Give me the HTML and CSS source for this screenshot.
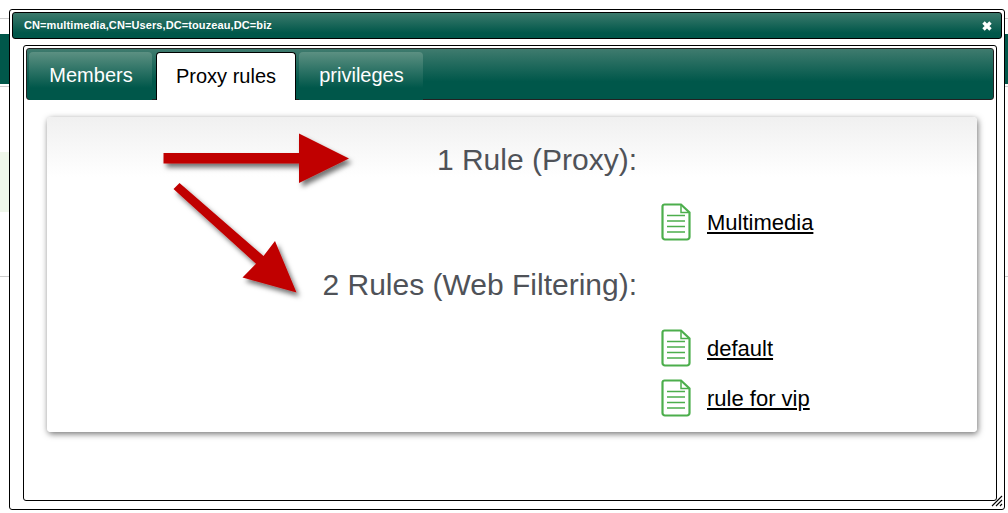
FILE: index.html
```html
<!DOCTYPE html>
<html lang="en">
<head>
<meta charset="utf-8">
<title>Proxy rules</title>
<link rel="stylesheet" href="styles.css">
</head>
<body>
<div class="backdrop">
  <div class="bg-line-top"></div>
  <div class="bg-band"></div>
  <div class="bg-line-mid"></div>
  <div class="bg-pale"></div>
  <div class="bg-line-low"></div>
</div>
<section class="dialog">
  <header class="titlebar">
    <span class="title">CN=multimedia,CN=Users,DC=touzeau,DC=biz</span>
    <svg class="close" width="10" height="10" viewBox="0 0 10 10"><path d="M1.5 1.5 8.5 8.5M8.5 1.5 1.5 8.5" stroke="#fff" stroke-width="3.4"/></svg>
  </header>
  <div class="content">
    <nav class="tabs">
      <a class="tab">Members</a>
      <a class="tab active">Proxy rules</a>
      <a class="tab">privileges</a>
    </nav>
    <div class="card">
      <div class="rule-group">
        <h2 class="heading">1 Rule (Proxy):</h2>
        <ul class="rules">
          <li class="rule">
            <svg class="doc" width="30" height="38" viewBox="0 0 30 38"><path d="M3.5 1.5H20L28.5 9.5V34a2.500 2.500 0 0 1-2.500 2.500H4A2.500 2.500 0 0 1 1.500 34V3.500A2 2 0 0 1 3.500 1.500Z" fill="#fff" stroke="#4cae4c" stroke-width="2.200"/><path d="M20 2V9.500H28" fill="none" stroke="#4cae4c" stroke-width="1.500"/><path d="M6 12.500H24M6 18H24M6 23.500H24M6 29H24" stroke="#4cae4c" stroke-width="1.700"/></svg>
            <a class="rule-link">Multimedia</a>
          </li>
        </ul>
      </div>
      <div class="rule-group">
        <h2 class="heading">2 Rules (Web Filtering):</h2>
        <ul class="rules">
          <li class="rule">
            <svg class="doc" width="30" height="38" viewBox="0 0 30 38"><path d="M3.5 1.5H20L28.5 9.5V34a2.500 2.500 0 0 1-2.500 2.500H4A2.500 2.500 0 0 1 1.500 34V3.500A2 2 0 0 1 3.500 1.500Z" fill="#fff" stroke="#4cae4c" stroke-width="2.200"/><path d="M20 2V9.500H28" fill="none" stroke="#4cae4c" stroke-width="1.500"/><path d="M6 12.500H24M6 18H24M6 23.500H24M6 29H24" stroke="#4cae4c" stroke-width="1.700"/></svg>
            <a class="rule-link">default</a>
          </li>
          <li class="rule">
            <svg class="doc" width="30" height="38" viewBox="0 0 30 38"><path d="M3.5 1.5H20L28.5 9.5V34a2.500 2.500 0 0 1-2.500 2.500H4A2.500 2.500 0 0 1 1.500 34V3.500A2 2 0 0 1 3.500 1.500Z" fill="#fff" stroke="#4cae4c" stroke-width="2.200"/><path d="M20 2V9.500H28" fill="none" stroke="#4cae4c" stroke-width="1.500"/><path d="M6 12.500H24M6 18H24M6 23.500H24M6 29H24" stroke="#4cae4c" stroke-width="1.700"/></svg>
            <a class="rule-link">rule for vip</a>
          </li>
        </ul>
      </div>
      <svg class="arrows" width="230" height="190" viewBox="0 0 230 190">
        <defs><filter id="sh" x="-20%" y="-30%" width="150%" height="170%"><feDropShadow dx="3" dy="4" stdDeviation="2.500" flood-color="#000" flood-opacity=".55"/></filter></defs>
        <path filter="url(#sh)" d="M13.500 32H149V12.500L199 37.500 149 62V42.500H13.500Z" fill="#c00000"/>
        <path filter="url(#sh)" d="M23.500 68 29.500 62 113.500 135 125 120 146.500 171.500 92.500 156.500 106 142.700Z" fill="#c00000"/>
      </svg>
    </div>
    <svg class="grip" width="12" height="12" viewBox="0 0 12 12"><path d="M1 11 11 1M5 11 11 5M9 11 11 9" stroke="#000" stroke-width="1.100" fill="none"/></svg>
  </div>
</section>
</body>
</html>
```
FILE: styles.css
```css
* { box-sizing: border-box; }
html, body { margin: 0; height: 100%; overflow: hidden; }
body { position: relative; width: 1008px; height: 513px; background: #fff; font-family: "Liberation Sans", Arial, sans-serif; }

.backdrop { display: flex; flex-direction: column; height: 100%; }
.bg-line-top { height: 1px; margin-top: 18px; background: #ccc; }
.bg-band { height: 50px; margin-top: 15px; background: #00574a; }
.bg-line-mid { height: 1px; margin-top: 2px; background: #ccc; }
.bg-pale { height: 60px; margin-top: 65px; width: 60px; background: #eff7ea; }
.bg-line-low { height: 1px; margin-top: 64px; background: #ccc; }

.dialog {
  position: absolute; left: 9px; top: 9px; width: 996px; height: 501px;
  background: #fff; border: 1px solid #000; border-radius: 3px;
  padding: 2px; display: flex; flex-direction: column;
}
.titlebar {
  height: 27px; flex: none; margin: 0 0 6px; padding: 0 10px 0 11px;
  display: flex; align-items: center; justify-content: space-between;
  border: 1px solid #000; border-radius: 3px;
  background: linear-gradient(#3c7a6c, #00574a 80%);
  color: #fff; font-size: 11px; font-weight: bold; letter-spacing: .1px;
}
.title { position: relative; top: -1px; }
.close { display: block; margin-right: -1px; }

.content {
  position: relative; flex: none; width: 974px; height: 456px; margin-left: 11px;
  border: 1px solid #000; border-radius: 3px; padding: 2px;
}
.tabs {
  height: 52px; margin: 0; padding: 3px 2px 0;
  display: flex; align-items: flex-end; gap: 3px;
  border: 1px solid #222; border-radius: 3px;
  background: linear-gradient(#3f7b6e, #00574a 65%);
}
.tab {
  width: 124px; height: 48px; padding: 10px 0 0 1px; margin-bottom: 0; text-align: center;
  align-self: flex-start; color: #fff; font-size: 20px; line-height: 26px;
  border-radius: 4px 4px 0 0;
  background: linear-gradient(#5c9082, #00574a 75%);
}
.tab:first-child { width: 123px; }
.tab.active {
  width: 140px; height: 48px; margin: 0 0 -1px 1px; padding: 10px 0 0; color: #000;
  background: #fff; border: 1px solid #000; border-bottom: 0;
}

.card {
  position: relative; margin: 17px 0 0 21px; width: 930px; height: 315px;
  padding-top: 25px; border-radius: 4px; background: linear-gradient(#f0f0f0, #fff 60px);
  box-shadow: 1px 2px 6px rgba(0,0,0,.55);
}
.rule-group { display: flex; flex-direction: column; }
.heading {
  margin: 0; width: 590px; text-align: right;
  color: #4f5258; font-size: 30px; font-weight: normal; line-height: 36px;
}
.rules { list-style: none; margin: 26px 0 0; padding: 0 0 0 614px; }
.rule { display: flex; align-items: center; gap: 16px; height: 38px; margin-bottom: 12px; }
.rule:last-child { margin-bottom: 0; }
.rule-group + .rule-group { margin-top: 25px; }
.rule-group + .rule-group .rules { margin-top: 27px; }
.doc { display: block; flex: none; margin-bottom: 2px; }
.rule-link { color: #000; font-size: 22px; text-decoration: underline; }
.arrows { position: absolute; left: 103px; top: 4px; }
.grip { position: absolute; right: -7px; bottom: -7px; }
```
